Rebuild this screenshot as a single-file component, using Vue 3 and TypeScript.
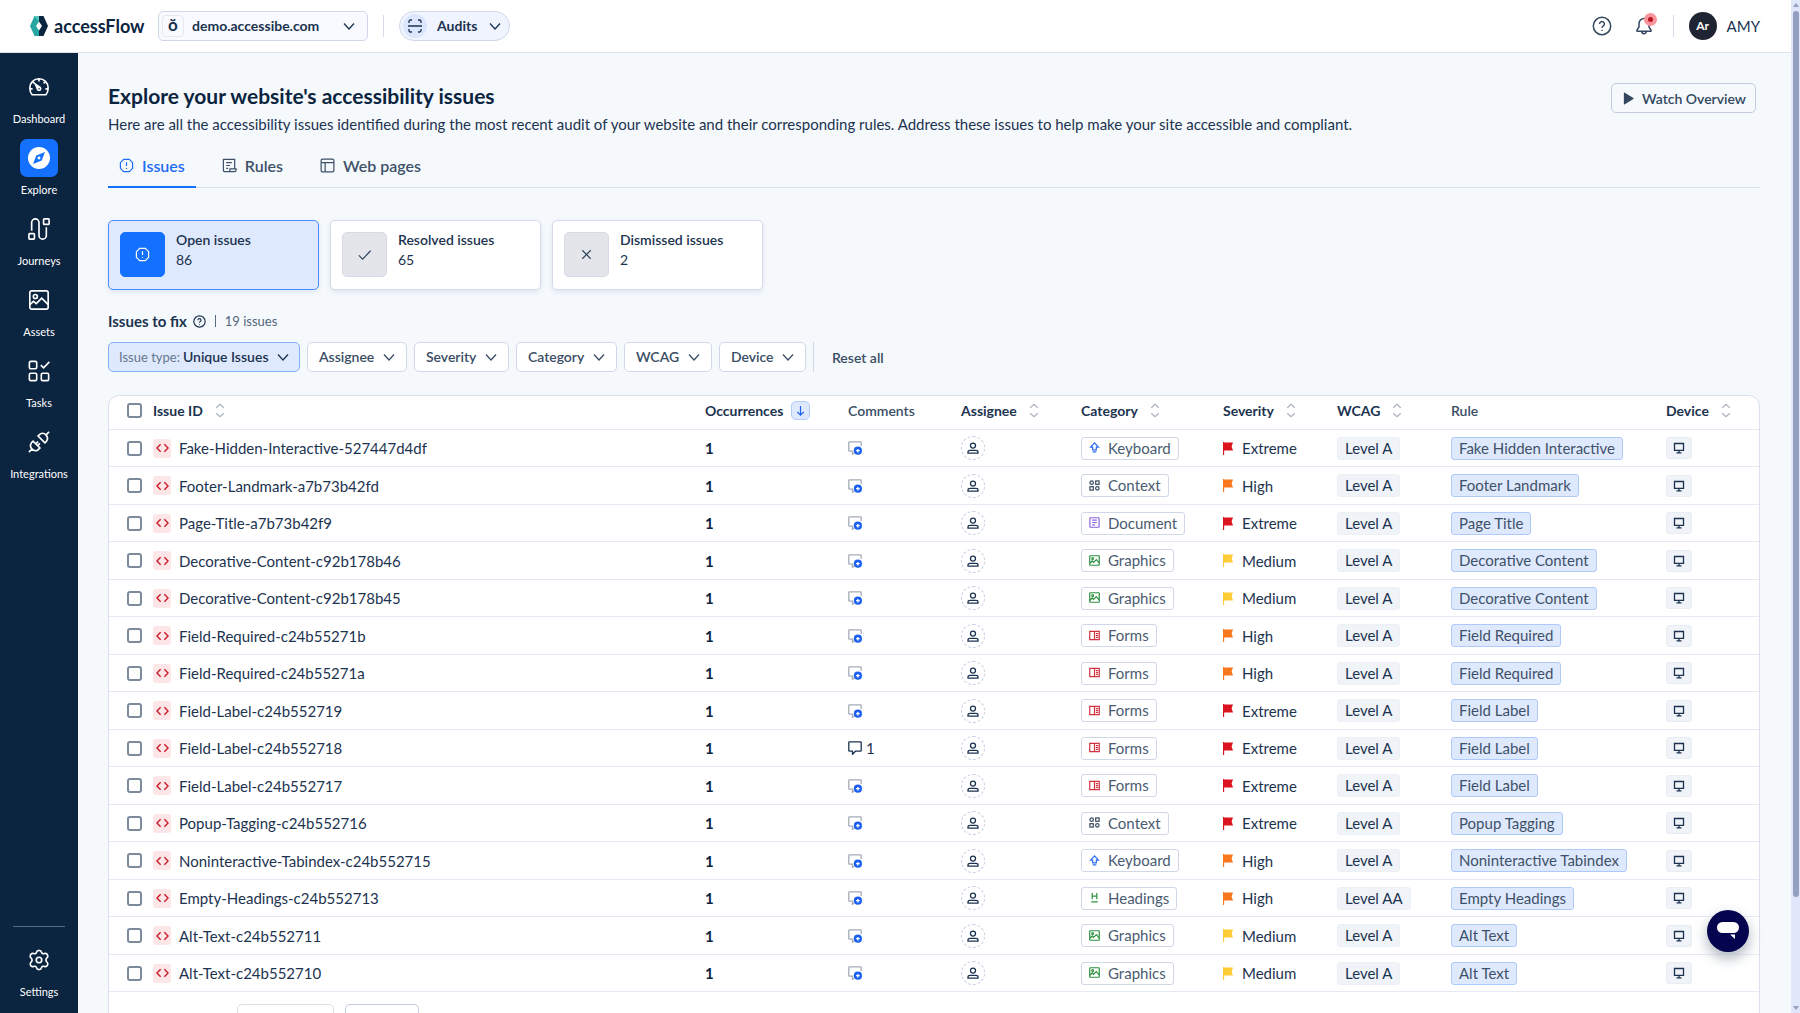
<script setup lang="ts">
import { ref } from 'vue'

type Severity = 'Extreme' | 'High' | 'Medium'
type Category = 'Keyboard' | 'Context' | 'Document' | 'Graphics' | 'Forms' | 'Headings'

interface Issue {
  id: string
  category: Category
  severity: Severity
  level: string
  rule: string
  comments: number
}

const issue = (
  id: string,
  category: Category,
  severity: Severity,
  rule: string,
  comments = 0,
  level = 'Level A',
): Issue => ({ id, category, severity, level, rule, comments })

const issues: Issue[] = [
  issue('Fake-Hidden-Interactive-527447d4df', 'Keyboard', 'Extreme', 'Fake Hidden Interactive'),
  issue('Footer-Landmark-a7b73b42fd', 'Context', 'High', 'Footer Landmark'),
  issue('Page-Title-a7b73b42f9', 'Document', 'Extreme', 'Page Title'),
  issue('Decorative-Content-c92b178b46', 'Graphics', 'Medium', 'Decorative Content'),
  issue('Decorative-Content-c92b178b45', 'Graphics', 'Medium', 'Decorative Content'),
  issue('Field-Required-c24b55271b', 'Forms', 'High', 'Field Required'),
  issue('Field-Required-c24b55271a', 'Forms', 'High', 'Field Required'),
  issue('Field-Label-c24b552719', 'Forms', 'Extreme', 'Field Label'),
  issue('Field-Label-c24b552718', 'Forms', 'Extreme', 'Field Label', 1),
  issue('Field-Label-c24b552717', 'Forms', 'Extreme', 'Field Label'),
  issue('Popup-Tagging-c24b552716', 'Context', 'Extreme', 'Popup Tagging'),
  issue('Noninteractive-Tabindex-c24b552715', 'Keyboard', 'High', 'Noninteractive Tabindex'),
  issue('Empty-Headings-c24b552713', 'Headings', 'High', 'Empty Headings', 0, 'Level AA'),
  issue('Alt-Text-c24b552711', 'Graphics', 'Medium', 'Alt Text'),
  issue('Alt-Text-c24b552710', 'Graphics', 'Medium', 'Alt Text'),
]

const navItems = [
  { label: 'Dashboard', icon: 'i-gauge' },
  { label: 'Explore', icon: 'i-compass' },
  { label: 'Journeys', icon: 'i-route' },
  { label: 'Assets', icon: 'i-image' },
  { label: 'Tasks', icon: 'i-tasks' },
  { label: 'Integrations', icon: 'i-plug' },
]

const tabs = [
  { label: 'Issues', icon: 'i-alert' },
  { label: 'Rules', icon: 'i-rules' },
  { label: 'Web pages', icon: 'i-layout' },
]

const cards = [
  { label: 'Open issues', count: 86, icon: 'i-alert' },
  { label: 'Resolved issues', count: 65, icon: 'i-check' },
  { label: 'Dismissed issues', count: 2, icon: 'i-x' },
]

const filters = ['Assignee', 'Severity', 'Category', 'WCAG', 'Device']
const activeTab = ref('Issues')
const activeCard = ref('Open issues')
const selected = ref<string[]>([])
</script>

<template>
  <svg class="defs" aria-hidden="true">
    <symbol id="i-chevron" viewBox="0 0 12 12"><path d="M1 3.500 6 9l5-5.500" /></symbol>
    <symbol id="i-scan" viewBox="0 0 14 14"><path d="M1 4V2.500Q1 1 2.500 1H4M10 1h1.500Q13 1 13 2.500V4M13 10v1.500q0 1.500-1.500 1.500H10M4 13H2.500Q1 13 1 11.500V10M0 7h14" /></symbol>
    <symbol id="i-help" viewBox="0 0 20 20"><circle cx="10" cy="10" r="8.700" /><path d="M7.600 8a2.400 2.400 0 1 1 3.600 2.100q-1.200.7-1.200 1.700M10 14v.9" /></symbol>
    <symbol id="i-bell" viewBox="0 0 18 20"><path d="M9 2.500a5 5 0 0 0-5 5V11L2 14.200q-.4 1 .7 1h12.600q1.100 0 .7-1L14 11V7.500a5 5 0 0 0-5-5zM6.800 15.500a2.200 2.200 0 0 0 4.400 0" /></symbol>
    <symbol id="i-gauge" viewBox="0 0 24 24"><path d="M4.500 20.500h15Q22 17.500 22 13A10 10 0 0 0 2 13q0 4.500 2.500 7.500zM12 3v3M5 6l2 2M19 6l-2 2M2 14h3M19 14h3M10.500 14 8 9l4.500 3" /><circle cx="12" cy="14" r="1.800" /></symbol>
    <symbol id="i-compass" viewBox="0 0 24 24"><circle cx="12" cy="12" r="12" fill="#fff" stroke="none" /><path d="M18.500 5.500 15 14.700 5.500 18.500 9 9.300z" fill="#1470ff" stroke="none" /><circle cx="12" cy="12" r="1.600" fill="#fff" stroke="none" /></symbol>
    <symbol id="i-route" viewBox="0 0 24 24"><rect x="1" y="17" width="6" height="6" rx=".8" /><rect x="17" y="1" width="6" height="6" rx=".8" /><path d="M4 14V5a4 4 0 0 1 8 0v14a4 4 0 0 0 8 0v-9" /></symbol>
    <symbol id="i-image" viewBox="0 0 24 24"><rect x="2" y="2" width="20" height="20" rx="2" /><circle cx="8" cy="8.200" r="2.200" /><path d="m2 17 4-3.500 3 2.500 6-6 7 7" /></symbol>
    <symbol id="i-tasks" viewBox="0 0 24 24"><rect x="1.500" y="1.500" width="8" height="8" rx="1.500" /><rect x="1.500" y="14.500" width="8" height="8" rx="1.500" /><rect x="14.500" y="14.500" width="8" height="8" rx="1.500" /><path d="m14 5.500 3 3L23.300 2" /></symbol>
    <symbol id="i-plug" viewBox="0 0 24 24"><path d="M1 23l3.500-3.500M5.500 11 13 18.500l-1.500 1.500c-2 2-5 1.800-7-.2s-2.200-5-.5-7.300zM8.500 14l2.500-2.500M10.500 16l2.500-2.500M23 1l-3.500 3.500M18.500 13 11 5.500 12.500 4c2-2 5-1.800 7 .2s2.200 5 .5 7.300z" /></symbol>
    <symbol id="i-gear" viewBox="0 0 24 24"><circle cx="12" cy="12" r="3" /><path d="M12 1.500c1.600 0 2.400.7 2.800 2.200.5 1.400 1.700 1.800 3 1.300 1.800-.6 2.800 0 3.500 1.300.8 1.500.4 2.500-.7 3.500-1.400 1.300-1.400 3.100 0 4.400 1.100 1 1.500 2 .7 3.500-.7 1.300-1.700 1.900-3.500 1.300-1.300-.5-2.500-.1-3 1.300-.4 1.500-1.200 2.200-2.800 2.200s-2.400-.7-2.800-2.200c-.5-1.400-1.700-1.800-3-1.300-1.800.6-2.800 0-3.500-1.300-.8-1.500-.4-2.500.7-3.500 1.400-1.300 1.400-3.100 0-4.400-1.100-1-1.500-2-.7-3.500C3.400 5 4.400 4.400 6.200 5c1.300.5 2.500.1 3-1.300.4-1.500 1.200-2.200 2.800-2.200z" /></symbol>
    <symbol id="i-alert" viewBox="0 0 16 16"><path d="M5 1.500h6L14.500 5v6L11 14.500H5L1.500 11V5zM8 4.500v4M8 10.700v.9" /></symbol>
    <symbol id="i-rules" viewBox="0 0 16 16"><path d="M7 14.500H3Q1.500 14.500 1.500 13V1.500h12V11M4.500 5h6M4.500 8h4M4.500 11h2M7 14.500q1.500 0 1.500-1.500v-1.500H15V13q0 1.500-1.500 1.500z" /></symbol>
    <symbol id="i-layout" viewBox="0 0 16 16"><rect x="1.200" y="1.200" width="13.600" height="13.600" rx="1.500" /><path d="M1.200 5h13.600M5.500 5v9.800" /></symbol>
    <symbol id="i-check" viewBox="0 0 16 16"><path d="m2 9 4 4 8.500-9" /></symbol>
    <symbol id="i-x" viewBox="0 0 16 16"><path d="m3.500 3.500 9 9M12.500 3.500l-9 9" /></symbol>
    <symbol id="i-sort" viewBox="0 0 10 16"><path d="M1 5l4-3.500L9 5M1 11l4 3.500L9 11" /></symbol>
    <symbol id="i-down" viewBox="0 0 12 12"><path d="M6 1v10M2.500 7.500 6 11l3.500-3.500" /></symbol>
    <symbol id="i-code" viewBox="0 0 14 10"><path d="M5 1 1 5l4 4M9 1l4 4-4 4" /></symbol>
    <symbol id="i-comment" viewBox="0 0 14 14"><path d="M1.500.8h11q.7 0 .7.700v8q0 .7-.7.700H7.500L4.500 13.300V10.200h-3q-.7 0-.7-.7v-8q0-.7.700-.7z" /></symbol>
    <symbol id="i-comment-add" viewBox="0 0 14 14"><path d="M13.200 5V1.500q0-.7-.7-.7h-11q-.7 0-.7.700v8q0 .7.700.7h3v3.100L6 12" stroke="#a5abb8" /><circle cx="9.900" cy="9.700" r="4.100" fill="#1d5ff0" stroke="none" /><path d="M9.900 7.900v3.600M8.100 9.700h3.600" stroke="#fff" /></symbol>
    <symbol id="i-user" viewBox="0 0 12 12"><circle cx="6" cy="3.600" r="2.500" /><path d="M1 11.200V10Q1 8.300 3 8.300h6Q11 8.300 11 10v1.200z" /></symbol>
    <symbol id="i-monitor" viewBox="0 0 12 12"><path d="M1.500 1.500h9v6.800h-9zM6 8.300v2.500M3.500 10.800h5" /></symbol>
    <symbol id="i-flag" viewBox="0 0 10 13"><path d="M.5 0v13" /><path d="M0 .5h10L8.600 4.500 10 8.500H0z" fill="currentColor" stroke="none" /></symbol>
    <symbol id="c-Keyboard" viewBox="0 0 12 12"><path d="M6 1 1.800 5.500H4v3h4v-3h2.200zM4 10.700h4" stroke="#2b6bf3" /></symbol>
    <symbol id="c-Context" viewBox="0 0 12 12"><g stroke="#3a4a60"><rect x="7.300" y="1" width="3.700" height="3.700" /><rect x="1" y="7.300" width="3.700" height="3.700" /><circle cx="2.900" cy="2.900" r="1.900" /><circle cx="9.100" cy="9.100" r="1.900" /></g></symbol>
    <symbol id="c-Document" viewBox="0 0 12 12"><path d="M1.800.8h8.400q.8 0 .8.800v8.800q0 .8-.8.800H1.800q-.8 0-.8-.8V1.600q0-.8.800-.8zM3.500 3.500h5M3.500 6h5M3.500 8.500h3" stroke="#8a63e0" /></symbol>
    <symbol id="c-Graphics" viewBox="0 0 12 12"><g stroke="#2d9140"><rect x=".8" y=".8" width="10.400" height="10.400" rx=".6" /><circle cx="4" cy="3.900" r="1" /><path d="m1 9 2.500-2.500L5 8l3-3 3 3.500" /></g></symbol>
    <symbol id="c-Forms" viewBox="0 0 12 12"><path d="M.8 1.500h10.400v9H.8zM6 1.500v9M7.500 4h2.500M7.500 6h2.500M7.500 8h2.500" stroke="#cf3340" /></symbol>
    <symbol id="c-Headings" viewBox="0 0 12 12"><path d="M3.500 1v7M8.500 1v7M3.500 4.500h5M2.500 10.800h7" stroke="#2d9140" /></symbol>
  </svg>

  <div class="app">
    <div class="screen">
      <header class="topbar">
        <a class="brand" href="#">
          <svg width="18" height="20" viewBox="0 0 18 20" aria-hidden="true">
            <path d="M4.500 0H9v5.500L6 10l3 4.500V20H4.500L0 10z" fill="#27a5a0" />
            <path d="M9 0h4.500L18 10l-4.500 10H9v-5.500L12 10 9 5.500z" fill="#0b2440" />
            <path d="M4.500 0H9v5.500z" fill="#55c9c2" />
          </svg>
          <span>accessFlow</span>
        </a>
        <label class="site">
          <span class="site-icon" aria-hidden="true">ŏ</span>
          <select aria-label="Website"><option>demo.accessibe.com</option></select>
          <svg class="chev"><use href="#i-chevron" /></svg>
        </label>
        <span class="rule-v"></span>
        <label class="mode">
          <span class="mode-icon"><svg><use href="#i-scan" /></svg></span>
          <select aria-label="Mode"><option>Audits</option></select>
          <svg class="chev"><use href="#i-chevron" /></svg>
        </label>
        <div class="account">
          <button class="icon-btn help" aria-label="Help"><svg><use href="#i-help" /></svg></button>
          <button class="icon-btn bell" aria-label="Notifications">
            <svg><use href="#i-bell" /></svg><span class="dot"></span>
          </button>
          <span class="rule-v"></span>
          <button class="user"><span class="avatar">Ar</span>AMY</button>
        </div>
      </header>

      <div class="body">
        <nav class="side" aria-label="Main">
          <a v-for="n in navItems" :key="n.label" href="#" :class="{ on: n.label === 'Explore' }">
            <span class="tile"><svg><use :href="'#' + n.icon" /></svg></span>{{ n.label }}
          </a>
          <a class="settings" href="#">
            <span class="tile"><svg><use href="#i-gear" /></svg></span>Settings
          </a>
        </nav>

        <main>
          <div class="intro">
            <div>
              <h1>Explore your website's accessibility issues</h1>
              <p>Here are all the accessibility issues identified during the most recent audit of your website and their corresponding rules. Address these issues to help make your site accessible and compliant.</p>
            </div>
            <button class="watch">
              <svg viewBox="0 0 11 13" aria-hidden="true"><path d="M1.500 1.200 10 6.500l-8.500 5.300z" fill="currentColor" stroke-linejoin="round" /></svg>
              Watch Overview
            </button>
          </div>

          <div class="tabs" role="tablist">
            <button v-for="t in tabs" :key="t.label" role="tab" :aria-selected="activeTab === t.label" @click="activeTab = t.label">
              <svg><use :href="'#' + t.icon" /></svg>{{ t.label }}
            </button>
          </div>

          <div class="cards">
            <button v-for="c in cards" :key="c.label" :class="{ on: activeCard === c.label }" @click="activeCard = c.label">
              <span class="card-icon"><svg><use :href="'#' + c.icon" /></svg></span>
              <span class="card-text"><b>{{ c.label }}</b><span>{{ c.count }}</span></span>
            </button>
          </div>

          <div class="subhead">
            <h2>Issues to fix</h2>
            <svg><use href="#i-help" /></svg>
            <i></i>
            <span>19 issues</span>
          </div>

          <div class="filters">
            <label class="filter on">
              <span>Issue type:</span>
              <select><option>Unique Issues</option></select>
              <svg class="chev"><use href="#i-chevron" /></svg>
            </label>
            <label v-for="f in filters" :key="f" class="filter">
              <select :aria-label="f"><option>{{ f }}</option></select>
              <svg class="chev"><use href="#i-chevron" /></svg>
            </label>
            <button class="reset">Reset all</button>
          </div>

          <section class="panel">
            <table>
              <colgroup>
                <col class="w-check" /><col /><col class="w-occ" /><col class="w-com" /><col class="w-asg" />
                <col class="w-cat" /><col class="w-sev" /><col class="w-wcag" /><col class="w-rule" /><col class="w-dev" />
              </colgroup>
              <thead>
                <tr>
                  <th><input type="checkbox" aria-label="Select all issues" /></th>
                  <th><span class="cell">Issue ID<svg class="sort"><use href="#i-sort" /></svg></span></th>
                  <th><span class="cell">Occurrences<span class="sorted"><svg><use href="#i-down" /></svg></span></span></th>
                  <th class="plain">Comments</th>
                  <th><span class="cell">Assignee<svg class="sort"><use href="#i-sort" /></svg></span></th>
                  <th><span class="cell">Category<svg class="sort"><use href="#i-sort" /></svg></span></th>
                  <th><span class="cell">Severity<svg class="sort"><use href="#i-sort" /></svg></span></th>
                  <th><span class="cell">WCAG<svg class="sort"><use href="#i-sort" /></svg></span></th>
                  <th class="plain">Rule</th>
                  <th><span class="cell">Device<svg class="sort"><use href="#i-sort" /></svg></span></th>
                </tr>
              </thead>
              <tbody>
                <tr v-for="r in issues" :key="r.id">
                  <td><input v-model="selected" type="checkbox" :value="r.id" :aria-label="'Select ' + r.id" /></td>
                  <td><span class="cell id"><span class="code"><svg><use href="#i-code" /></svg></span>{{ r.id }}</span></td>
                  <td class="count">1</td>
                  <td>
                    <span class="cell comment">
                      <svg><use :href="r.comments ? '#i-comment' : '#i-comment-add'" /></svg>
                      <template v-if="r.comments">{{ r.comments }}</template>
                    </span>
                  </td>
                  <td><button class="assign" aria-label="Assign"><svg><use href="#i-user" /></svg></button></td>
                  <td><span class="tag cat"><svg><use :href="'#c-' + r.category" /></svg>{{ r.category }}</span></td>
                  <td>
                    <span class="cell sev"><svg :class="r.severity.toLowerCase()"><use href="#i-flag" /></svg>{{ r.severity }}</span>
                  </td>
                  <td><span class="tag level">{{ r.level }}</span></td>
                  <td><span class="tag rule">{{ r.rule }}</span></td>
                  <td><span class="device"><svg><use href="#i-monitor" /></svg></span></td>
                </tr>
              </tbody>
            </table>
            <div class="pager">
              <button class="prev" aria-label="Previous page" disabled></button>
              <button class="next" aria-label="Next page"></button>
            </div>
          </section>
        </main>
      </div>
    </div>

    <div class="scroll" aria-hidden="true"><i class="up"></i><i class="thumb"></i><i class="dn"></i></div>
    <button class="chat" aria-label="Open chat">
      <svg viewBox="0 0 24 20"><rect x="1" y="1" width="22" height="11" rx="5.500" fill="#fff" /><path d="M14 13.500h5V18z" fill="#fff" /></svg>
    </button>
  </div>
</template>

<style>
body {
  overflow: hidden;
}
</style>

<style scoped>
* {
  box-sizing: border-box;
}
.defs {
  position: absolute;
  width: 0;
  height: 0;
}
.app {
  position: relative;
  display: flex;
  height: 100vh;
  overflow: hidden;
  background: #f5f9fc;
  color: #1c3350;
  font-family: Lato, 'Liberation Sans', sans-serif;
  font-size: 15px;
}
svg {
  flex: none;
  fill: none;
  stroke: currentColor;
  stroke-width: 1.300;
}
button,
select {
  margin: 0;
  padding: 0;
  border: 0;
  background: none;
  color: inherit;
  font: inherit;
  appearance: none;
}
a {
  color: inherit;
  text-decoration: none;
}
.screen {
  flex: 1;
  min-width: 0;
  display: flex;
  flex-direction: column;
}

.topbar {
  flex: none;
  display: flex;
  align-items: center;
  height: 53px;
  padding: 0 31px 0 30px;
  background: #fff;
  border-bottom: 1px solid #dfe3ef;
}
.brand {
  display: flex;
  align-items: center;
  gap: 6px;
  width: 128px;
  color: #0b2440;
  font-size: 18px;
  font-weight: 700;
}
.brand svg {
  stroke: none;
}
.chev {
  width: 12px;
  height: 12px;
  margin-left: -12px;
  pointer-events: none;
}
.site {
  display: flex;
  align-items: center;
  width: 210px;
  height: 30px;
  padding: 0 12px 0 3px;
  background: #f8faff;
  border: 1px solid #cfd6e8;
  border-radius: 5px;
  font-size: 14px;
  font-weight: 700;
}
.site-icon {
  width: 22px;
  height: 22px;
  border: 1px solid #e6e8f0;
  border-radius: 4px;
  text-align: center;
  line-height: 18px;
  font-size: 17px;
  font-weight: 700;
}
.site select {
  flex: 1;
  padding: 0 0 2px 8px;
}
.rule-v {
  width: 1px;
  height: 22px;
  background: #d5dbeb;
}
.site + .rule-v {
  margin: 0 15px;
}
.mode {
  display: flex;
  align-items: center;
  width: 111px;
  height: 30px;
  padding: 0 8px 0 3px;
  background: #eff4ff;
  border: 1px solid #cfd6e8;
  border-radius: 15px;
  font-size: 14px;
  font-weight: 700;
}
.mode-icon {
  display: grid;
  place-items: center;
  width: 24px;
  height: 24px;
  border-radius: 50%;
  background: #dce7fe;
}
.mode-icon svg {
  width: 14px;
  height: 14px;
}
.mode select {
  flex: 1;
  padding: 0 0 2px 10px;
}
.account {
  display: flex;
  align-items: center;
  margin-left: auto;
}
.icon-btn {
  position: relative;
  display: flex;
  color: #33475f;
}
.icon-btn svg {
  width: 20px;
  height: 20px;
  stroke-width: 1.500;
}
.help {
  margin-right: 22px;
}
.bell {
  margin-right: 19px;
}
.dot {
  position: absolute;
  top: -3px;
  right: -3px;
  width: 13px;
  height: 13px;
  border: 4px solid #f8949b;
  border-radius: 50%;
  background: #b9121f;
}
.user {
  display: flex;
  align-items: center;
  gap: 10px;
  margin-left: 15px;
}
.avatar {
  width: 28px;
  border-radius: 50%;
  background: #1e2431;
  color: #fff;
  font-size: 12px;
  font-weight: 700;
  line-height: 28px;
  text-align: center;
}

.body {
  flex: 1;
  min-height: 0;
  display: flex;
}
.side {
  flex: none;
  display: flex;
  flex-direction: column;
  gap: 12px;
  width: 78px;
  padding: 15px 0 13px;
  background: #0b2440;
  color: #fff;
  font-size: 11px;
  line-height: 16px;
}
.side a {
  display: flex;
  flex-direction: column;
  align-items: center;
  gap: 5px;
}
.tile {
  display: grid;
  place-items: center;
  width: 38px;
  height: 38px;
  border-radius: 7px;
}
.tile svg {
  width: 22px;
  height: 22px;
  stroke-width: 1.800;
}
.on .tile {
  background: #1470ff;
}
.side .settings {
  margin: auto 13px 0;
  padding-top: 14px;
  border-top: 1px solid #5a6b80;
}

main {
  flex: 1;
  min-width: 0;
  padding: 29px 31px 0 30px;
  overflow: hidden;
}
.intro {
  display: flex;
  justify-content: space-between;
  align-items: flex-start;
  padding-right: 4px;
}
h1 {
  margin: 0;
  color: #0b2440;
  font-size: 21px;
  font-weight: 700;
  line-height: 28px;
}
p {
  margin: 2px 0 0;
  line-height: 24px;
  white-space: nowrap;
}
.watch {
  flex: none;
  display: flex;
  align-items: center;
  gap: 8px;
  height: 30px;
  margin-top: 1px;
  padding: 0 9px 0 11px;
  border: 1px solid #c3cbe0;
  border-radius: 5px;
  color: #33475f;
  font-size: 14px;
  font-weight: 600;
}
.watch svg {
  width: 11px;
  height: 13px;
}
.tabs {
  display: flex;
  gap: 15px;
  margin-top: 10px;
  border-bottom: 1px solid #d9dfec;
}
.tabs button {
  display: flex;
  align-items: center;
  gap: 8px;
  height: 42px;
  margin-bottom: -1px;
  padding: 0 11px 2px;
  border-bottom: 2px solid transparent;
  color: #3e5168;
  font-size: 16px;
  font-weight: 600;
}
.tabs button[aria-selected='true'] {
  border-color: #1470ff;
  color: #1f6cf5;
}
.tabs svg {
  width: 15px;
  height: 15px;
}
.cards {
  display: flex;
  gap: 11px;
  margin-top: 32px;
}
.cards button {
  display: flex;
  gap: 11px;
  width: 211px;
  height: 70px;
  padding: 11px;
  border: 1px solid #d5dbeb;
  border-radius: 5px;
  background: #fff;
  box-shadow: 0 2px 5px #dfe5f0;
  font-size: 14px;
  text-align: left;
}
.cards button.on {
  border-color: #4a8bff;
  background: #dfe9fe;
}
.card-icon {
  display: grid;
  place-items: center;
  width: 45px;
  height: 45px;
  border: 1px solid #d5dae6;
  border-radius: 5px;
  background: #e3e5ea;
  color: #33475f;
}
.on .card-icon {
  border-color: #1470ff;
  background: #1470ff;
  color: #fff;
}
.card-icon svg {
  width: 15px;
  height: 15px;
}
.card-text {
  display: flex;
  flex-direction: column;
  line-height: 20px;
  margin-top: -2px;
}
.card-text b {
  font-weight: 600;
}
.subhead {
  display: flex;
  align-items: center;
  height: 20px;
  margin-top: 21px;
  font-size: 13px;
}
h2 {
  margin: 0 6px 0 0;
  font-size: 15px;
  font-weight: 700;
}
.subhead svg {
  width: 13px;
  height: 13px;
  stroke-width: 1.800;
}
.subhead i {
  width: 1px;
  height: 12px;
  margin: 0 9px;
  background: #5a6b80;
}
.subhead span {
  color: #54657a;
}
.filters {
  display: flex;
  gap: 7px;
  margin-top: 11px;
  font-size: 14px;
}
.filter {
  display: flex;
  align-items: center;
  height: 30px;
  padding: 0 11px 1px;
  border: 1px solid #d0d7e8;
  border-radius: 5px;
  background: #fff;
  color: #3a4d64;
  font-weight: 600;
}
.filter select {
  padding-right: 20px;
}
.filter.on {
  padding: 0 10px 1px;
  border-color: #86adf9;
  background: #dfe9fe;
  color: #1c3350;
}
.filter.on span {
  margin-right: 3px;
  color: #65768b;
  font-size: 13px;
  font-weight: 400;
}
.reset {
  height: 30px;
  padding-left: 18px;
  border-left: 1px solid #d0d7e8;
  color: #3a4d64;
  font-weight: 600;
}

.panel {
  margin-top: 23px;
  border: 1px solid #d9dfec;
  border-radius: 11px 11px 0 0;
  background: #fff;
}
table {
  width: 100%;
  border-collapse: separate;
  border-spacing: 0;
  table-layout: fixed;
}
.w-check {
  width: 44px;
}
.w-occ {
  width: 143px;
}
.w-com {
  width: 113px;
}
.w-asg {
  width: 120px;
}
.w-cat {
  width: 142px;
}
.w-sev,
.w-wcag {
  width: 114px;
}
.w-rule {
  width: 215px;
}
.w-dev {
  width: 93px;
}
th,
td {
  height: 38px;
  padding: 0;
  border-bottom: 1px solid #e7eaf4;
  line-height: 18px;
  text-align: left;
  vertical-align: middle;
  white-space: nowrap;
}
tbody tr:nth-child(odd) td {
  height: 37px;
}
th {
  height: 34px;
  padding-bottom: 4px;
  font-size: 14px;
  font-weight: 700;
}
th.plain {
  color: #3a4d64;
  font-weight: 600;
}
.cell {
  display: flex;
  align-items: center;
}
input {
  display: block;
  width: 15px;
  height: 15px;
  margin: 0 0 0 18px;
  border: 2px solid #7d8a9c;
  border-radius: 3px;
  background: #fff;
  appearance: none;
}
input:checked {
  background: #1470ff;
}
.sort {
  width: 10px;
  height: 15px;
  margin-left: 12px;
  color: #a9b0bc;
}
.sorted {
  display: grid;
  place-items: center;
  width: 19px;
  height: 19px;
  margin-left: 8px;
  border: 1px solid #b3cbfb;
  border-radius: 5px;
  background: #dfe9fe;
  color: #1d5ff0;
}
.sorted svg {
  width: 11px;
  height: 11px;
}
.code {
  display: grid;
  place-items: center;
  width: 18px;
  height: 19px;
  margin-right: 8px;
  border-radius: 3px;
  background: #fde6e7;
  color: #c9202c;
}
.code svg {
  width: 13px;
  height: 10px;
  stroke-width: 1.600;
}
.count {
  color: #0b2440;
  font-weight: 700;
}
.comment {
  gap: 4px;
}
.comment svg {
  width: 14px;
  height: 14px;
}
.assign {
  display: grid;
  place-items: center;
  width: 24px;
  height: 24px;
  border: 1px dashed #c6cde2;
  border-radius: 50%;
}
.assign svg {
  width: 12px;
  height: 12px;
}
.tag {
  display: inline-flex;
  align-items: center;
  height: 23px;
  padding: 0 7px 1px;
  border: 1px solid #d0d7e8;
  border-radius: 3px;
  color: #4a5b71;
  vertical-align: middle;
}
.cat svg {
  width: 11px;
  height: 11px;
  margin-right: 8px;
}
.level {
  border-color: #edf0f5;
  background: #f0f3f8;
  color: #1c3350;
}
.rule {
  border-color: #b0c9fb;
  background: #dfe9fe;
  color: #3e5168;
}
.sev svg {
  width: 10px;
  height: 13px;
  margin-right: 9px;
}
.extreme {
  color: #dc1420;
}
.high {
  color: #f9771d;
}
.medium {
  color: #fdcb35;
}
.device {
  display: grid;
  place-items: center;
  width: 26px;
  height: 22px;
  border: 1px solid #e8ecf3;
  border-radius: 3px;
  background: #f0f3f8;
}
.device svg {
  width: 12px;
  height: 12px;
}
.pager {
  display: flex;
  gap: 11px;
  padding: 12px 128px;
}
.pager button {
  width: 74px;
  height: 34px;
  border: 1px solid #c3cbe0;
  border-radius: 5px;
}
.pager .prev {
  width: 97px;
  border-color: #dddfe8;
}

.scroll {
  flex: none;
  display: flex;
  flex-direction: column;
  align-items: center;
  width: 9px;
  padding: 3px 0;
  background: #e1e7fa;
}
.up,
.dn {
  border: 3px solid transparent;
  border-top: 0;
  border-bottom: 4px solid #93a0c2;
}
.dn {
  margin-top: auto;
  border-top: 4px solid #93a0c2;
  border-bottom: 0;
}
.thumb {
  width: 6px;
  height: 88%;
  margin-top: 4px;
  border-radius: 3px;
  background: #93a0c2;
}
.chat {
  position: absolute;
  right: 51px;
  bottom: 61px;
  display: grid;
  place-items: center;
  width: 42px;
  height: 42px;
  border-radius: 50%;
  background: #05054f;
  box-shadow: 0 6px 14px #aab4bd;
}
.chat svg {
  width: 24px;
  height: 20px;
  stroke: none;
}
</style>
